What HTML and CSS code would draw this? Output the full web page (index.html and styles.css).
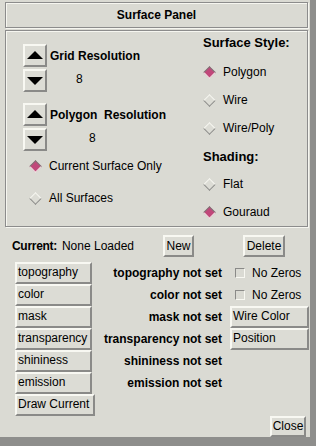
FILE: index.html
```html
<!DOCTYPE html>
<html>
<head>
<meta charset="utf-8">
<link rel="stylesheet" href="styles.css">
</head>
<body>
<div class="window">
  <div class="title">Surface Panel</div>
  <div class="panel">
    <div class="left-col">
      <div class="spinner">
        <div class="arrows">
          <div class="btn arrow"><span class="tri-up"></span></div>
          <div class="btn arrow"><span class="tri-down"></span></div>
        </div>
        <div class="spin-text">
          <div class="spin-label">Grid Resolution</div>
          <div class="spin-value v1">8</div>
        </div>
      </div>
      <div class="spinner s2">
        <div class="arrows">
          <div class="btn arrow"><span class="tri-up"></span></div>
          <div class="btn arrow"><span class="tri-down"></span></div>
        </div>
        <div class="spin-text">
          <div class="spin-label">Polygon&nbsp; Resolution</div>
          <div class="spin-value v2">8</div>
        </div>
      </div>
      <div class="radio r-cur"><span class="diamond on"></span>Current Surface Only</div>
      <div class="radio r-all"><span class="diamond"></span>All Surfaces</div>
    </div>
    <div class="right-col">
      <div class="heading">Surface Style:</div>
      <div class="radio r-right first"><span class="diamond on"></span>Polygon</div>
      <div class="radio r-right"><span class="diamond"></span>Wire</div>
      <div class="radio r-right"><span class="diamond"></span>Wire/Poly</div>
      <div class="heading h2">Shading:</div>
      <div class="radio r-right first2"><span class="diamond"></span>Flat</div>
      <div class="radio r-right"><span class="diamond on"></span>Gouraud</div>
    </div>
  </div>
  <div class="lower">
    <div class="current-row">
      <span class="cur-label">Current:</span>
      <span class="cur-value">None Loaded</span>
      <div class="btn new-btn">New</div>
      <div class="btn del-btn">Delete</div>
    </div>
    <div class="grid">
      <div class="btn tex-btn">topography</div>
      <div class="status">topography not set</div>
      <div class="extra"><span class="check"></span>No Zeros</div>

      <div class="btn tex-btn">color</div>
      <div class="status">color not set</div>
      <div class="extra"><span class="check"></span>No Zeros</div>

      <div class="btn tex-btn">mask</div>
      <div class="status">mask not set</div>
      <div class="btn side-btn">Wire Color</div>

      <div class="btn tex-btn">transparency</div>
      <div class="status">transparency not set</div>
      <div class="btn side-btn">Position</div>

      <div class="btn tex-btn">shininess</div>
      <div class="status">shininess not set</div>
      <div></div>

      <div class="btn tex-btn">emission</div>
      <div class="status">emission not set</div>
      <div></div>

      <div class="btn tex-btn draw-btn">Draw Current</div>
      <div></div>
      <div></div>
    </div>
    <div class="close-row"><div class="btn close-btn">Close</div></div>
  </div>
</div>
</body>
</html>
```
FILE: styles.css
```css
html, body {
  margin: 0;
  padding: 0;
}
body {
  width: 316px;
  height: 446px;
  background: #8e8e8c;
  font-family: "Liberation Sans", Arial, sans-serif;
  font-size: 12px;
  color: #000;
  overflow: hidden;
}
.window {
  width: 310px;
  height: 437px;
  box-sizing: border-box;
  background: #dadad3;
  padding: 1px 1px 0 5px;
  border-top: 1px solid #dadad3;
}
.title {
  height: 26px;
  box-sizing: border-box;
  border: 1px solid #8c8c8c;
  box-shadow: inset 1px 1px 0 #f6f6f0, 1px 1px 0 #f6f6f0;
  display: flex;
  align-items: center;
  justify-content: center;
  font-weight: bold;
  margin-right: 1px;
}
.panel {
  margin-top: 2px;
  height: 197px;
  box-sizing: border-box;
  border: 1px solid #8c8c8c;
  box-shadow: inset 1px 1px 0 #f6f6f0, 1px 1px 0 #f6f6f0;
  margin-right: 1px;
  display: flex;
}
.left-col {
  width: 197px;
  flex: none;
  padding-left: 17px;
  padding-top: 13px;
  box-sizing: border-box;
}
.spinner {
  display: flex;
}
.s2 {
  margin-top: 11px;
}
.arrows {
  display: flex;
  flex-direction: column;
  gap: 2px;
}
.btn {
  box-sizing: border-box;
  border: 2px solid;
  border-color: #f8f8f2 #8a8a88 #8a8a88 #f8f8f2;
  background: #dcdcd5;
}
.arrow {
  width: 24px;
  height: 23px;
  display: flex;
  align-items: center;
  justify-content: center;
}
.tri-up {
  width: 0;
  height: 0;
  border-left: 8px solid transparent;
  border-right: 8px solid transparent;
  border-bottom: 8px solid #000;
  margin-top: -1px;
}
.tri-down {
  width: 0;
  height: 0;
  border-left: 8px solid transparent;
  border-right: 8px solid transparent;
  border-top: 8px solid #000;
}
.spin-text {
  display: flex;
  flex-direction: column;
  padding-left: 3px;
}
.spin-label {
  font-weight: bold;
  height: 23px;
  line-height: 23px;
  margin-top: 1px;
}
.spin-value {
  height: 23px;
  line-height: 23px;
}
.v1 { padding-left: 26px; }
.v2 { padding-left: 39px; }
.radio {
  display: flex;
  align-items: center;
  height: 28px;
}
.r-cur {
  padding-left: 6px;
  height: 30px;
}
.r-all {
  padding-left: 6px;
  height: 34px;
}
.diamond {
  width: 9px;
  height: 9px;
  transform: rotate(45deg);
  box-sizing: border-box;
  border: 1px solid;
  border-color: #f8f8f2 #8a8a88 #8a8a88 #f8f8f2;
  background: #dcdcd5;
  margin-right: 9px;
  margin-left: 2px;
  flex: none;
}
.diamond.on {
  background: #c0487a;
  border-color: #7a7a78 #f4f4ee #f4f4ee #7a7a78;
}
.right-col {
  flex: 1;
  padding-top: 3px;
}
.heading {
  font-weight: bold;
  font-size: 13px;
  height: 18px;
  line-height: 18px;
}
.h2 {
  margin-top: 6px;
}
.first {
  margin-top: 6px;
}
.first2 {
  margin-top: 4px;
}
.lower {
  padding: 8px 0 0 10px;
}
.current-row {
  display: flex;
  align-items: center;
  height: 22px;
}
.cur-label {
  font-weight: bold;
  letter-spacing: -0.3px;
  margin-left: -3px;
}
.cur-value {
  margin-left: 5px;
}
.new-btn {
  margin-left: 29px;
  width: 31px;
  height: 22px;
  line-height: 18px;
  text-align: center;
}
.del-btn {
  margin-left: 49px;
  width: 42px;
  height: 22px;
  line-height: 18px;
  text-align: center;
}
.grid {
  margin-top: 5px;
  display: grid;
  grid-template-columns: 77px 130px 87px;
  grid-auto-rows: 22px;
  align-items: center;
}
.tex-btn {
  height: 22px;
  line-height: 17px;
  padding-left: 1px;
}
.draw-btn {
  width: 80px;
}
.status {
  font-weight: bold;
  text-align: right;
}
.extra {
  display: flex;
  align-items: center;
  padding-left: 13px;
  white-space: nowrap;
}
.check {
  width: 10px;
  height: 10px;
  box-sizing: border-box;
  border: 1px solid;
  border-color: #8a8a88 #f8f8f2 #f8f8f2 #8a8a88;
  margin-right: 7px;
  flex: none;
}
.side-btn {
  height: 22px;
  line-height: 17px;
  margin-left: 8px;
  padding-left: 1px;
  white-space: nowrap;
}
.close-row {
  display: flex;
  justify-content: flex-end;
  padding-right: 3px;
  margin-top: 0;
}
.close-btn {
  width: 36px;
  height: 21px;
  line-height: 17px;
  text-align: center;
}
```
